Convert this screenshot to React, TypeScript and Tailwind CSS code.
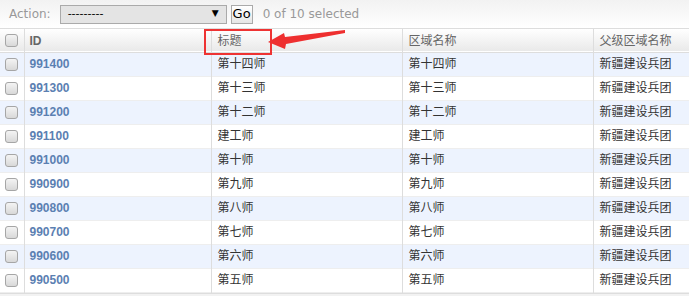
const rows = [
  ["991400", "第十四师", "第十四师"],
  ["991300", "第十三师", "第十三师"],
  ["991200", "第十二师", "第十二师"],
  ["991100", "建工师", "建工师"],
  ["991000", "第十师", "第十师"],
  ["990900", "第九师", "第九师"],
  ["990800", "第八师", "第八师"],
  ["990700", "第七师", "第七师"],
  ["990600", "第六师", "第六师"],
  ["990500", "第五师", "第五师"],
];

function Box() {
  return (
    <span className="block h-[13px] w-[13px] rounded-[3px] border border-[#a6a6a6] bg-gradient-to-b from-[#f4f4f4] to-[#d8d8d8]" />
  );
}

export default function App() {
  return (
    <div
      className="relative h-[296px] w-[689px] overflow-hidden bg-white text-[12px] text-[#333]"
      style={{ fontFamily: '"DejaVu Sans", "Noto Sans CJK SC", sans-serif' }}
    >
      {/* actions bar */}
      <div className="flex h-[29px] items-center border-b border-[#ddd] bg-gradient-to-b from-[#f2f2f2] to-white pl-[9px]">
        <span className="text-[#999]">Action:</span>
        <div className="ml-[9px] flex h-[19px] w-[167px] items-center justify-between border border-[#aaa] bg-[#e4e4e4] pl-[7px] pr-[7px] text-[11px] text-black">
          <span>---------</span>
          <span className="text-[9px] text-black">▼</span>
        </div>
        <button className="ml-[4px] flex h-[19px] w-[22px] items-center justify-center border border-[#aaa] bg-gradient-to-b from-white to-[#e6e6e6] text-[13px] text-black">
          Go
        </button>
        <span className="ml-[10px] text-[#999]">0 of 10 selected</span>
      </div>

      <table className="w-[689px] table-fixed border-collapse">
        <colgroup>
          <col className="w-[24px]" />
          <col className="w-[187px]" />
          <col className="w-[191px]" />
          <col className="w-[191px]" />
          <col />
        </colgroup>
        <thead>
          <tr className="h-[23px] border-b border-[#ddd] bg-gradient-to-b from-white to-[#e9e9e9] text-left text-[#666]">
            <th className="border-r border-[#ddd] pl-[5px]">
              <Box />
            </th>
            <th className="border-r border-[#ddd] pl-[5px] pt-px font-['Liberation_Sans',sans-serif] text-[12px] font-bold">
              ID
            </th>
            <th className="border-r border-[#ddd] pl-[6px] pt-px font-normal">标题</th>
            <th className="border-r border-[#ddd] pl-[6px] pt-px font-normal">区域名称</th>
            <th className="pl-[6px] pt-px font-normal">父级区域名称</th>
          </tr>
        </thead>
        <tbody>
          {rows.map(([id, title, name], i) => (
            <tr
              key={id}
              className={`h-[24px] border-b border-[#eee] ${i % 2 === 0 ? "bg-[#edf3fe]" : "bg-white"}`}
            >
              <td className="border-r border-[#ddd] pl-[5px]">
                <Box />
              </td>
              <td className="border-r border-[#ddd] pl-[5px] font-['Liberation_Sans',sans-serif] text-[12px] font-bold text-[#5b80b2]">
                {id}
              </td>
              <td className="border-r border-[#ddd] pl-[6px]">{title}</td>
              <td className="border-r border-[#ddd] pl-[6px]">{name}</td>
              <td className="pl-[6px]">新疆建设兵团</td>
            </tr>
          ))}
        </tbody>
      </table>
      <div className="h-[4px] border-t border-[#ddd] bg-[#f2f2f2]" />

      {/* annotation */}
      <div className="absolute left-[204px] top-[29px] h-[26px] w-[68px] border-2 border-[#ee3333]" />
      <svg className="absolute left-0 top-0" width="689" height="296">
        <polygon
          points="268,42 284,33 285,37 345,30 345,33 286,44 285,49"
          fill="#ee2f2f"
        />
      </svg>
    </div>
  );
}
